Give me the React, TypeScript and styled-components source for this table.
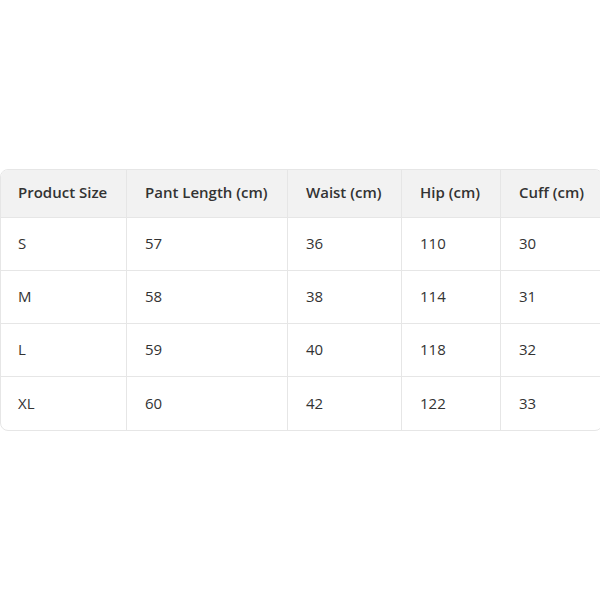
import React from 'react';
import styled, {createGlobalStyle} from 'styled-components';

const GlobalStyle = createGlobalStyle`
  html, body {
    margin: 0;
    padding: 0;
    background: #fff;
  }
`;

const Page = styled.div`
  display: flex;
  align-items: center;
  min-height: 599px;
  width: 600px;
  font-family: 'Open Sans', 'Noto Sans', sans-serif;
`;

const Table = styled.table`
  width: 601px;
  border-collapse: separate;
  border-spacing: 0;
  border: 1px solid #e6e6e6;
  border-radius: 8px;
  overflow: hidden;
  table-layout: fixed;
  font-size: 15px;
  color: #333;
`;

const HeadCell = styled.th<{$w: number}>`
  width: ${(p) => p.$w}px;
  height: 48px;
  padding: 0 0 2px 18px;
  text-align: left;
  font-weight: 600;
  background: #f2f2f2;
  border-bottom: 1px solid #e6e6e6;
  border-left: 1px solid #e6e6e6;
  box-sizing: border-box;
  &:first-child {
    border-left: none;
    padding-left: 17px;
  }
`;

const Cell = styled.td`
  height: 53px;
  padding: 0 0 1px 18px;
  border-bottom: 1px solid #e6e6e6;
  border-left: 1px solid #e6e6e6;
  box-sizing: border-box;
  &:first-child {
    border-left: none;
    padding-left: 17px;
  }
  tr:last-child > & {
    border-bottom: none;
  }
`;

const columns = [
  {label: 'Product Size', width: 125},
  {label: 'Pant Length (cm)', width: 161},
  {label: 'Waist (cm)', width: 114},
  {label: 'Hip (cm)', width: 99},
  {label: 'Cuff (cm)', width: 102}
];

const rows = [
  ['S', '57', '36', '110', '30'],
  ['M', '58', '38', '114', '31'],
  ['L', '59', '40', '118', '32'],
  ['XL', '60', '42', '122', '33']
];

export default function App() {
  return (
    <Page>
      <GlobalStyle />
      <Table>
        <thead>
          <tr>
            {columns.map((c) => (
              <HeadCell key={c.label} $w={c.width}>
                {c.label}
              </HeadCell>
            ))}
          </tr>
        </thead>
        <tbody>
          {rows.map((r) => (
            <tr key={r[0]}>
              {r.map((v, i) => (
                <Cell key={i}>{v}</Cell>
              ))}
            </tr>
          ))}
        </tbody>
      </Table>
    </Page>
  );
}
